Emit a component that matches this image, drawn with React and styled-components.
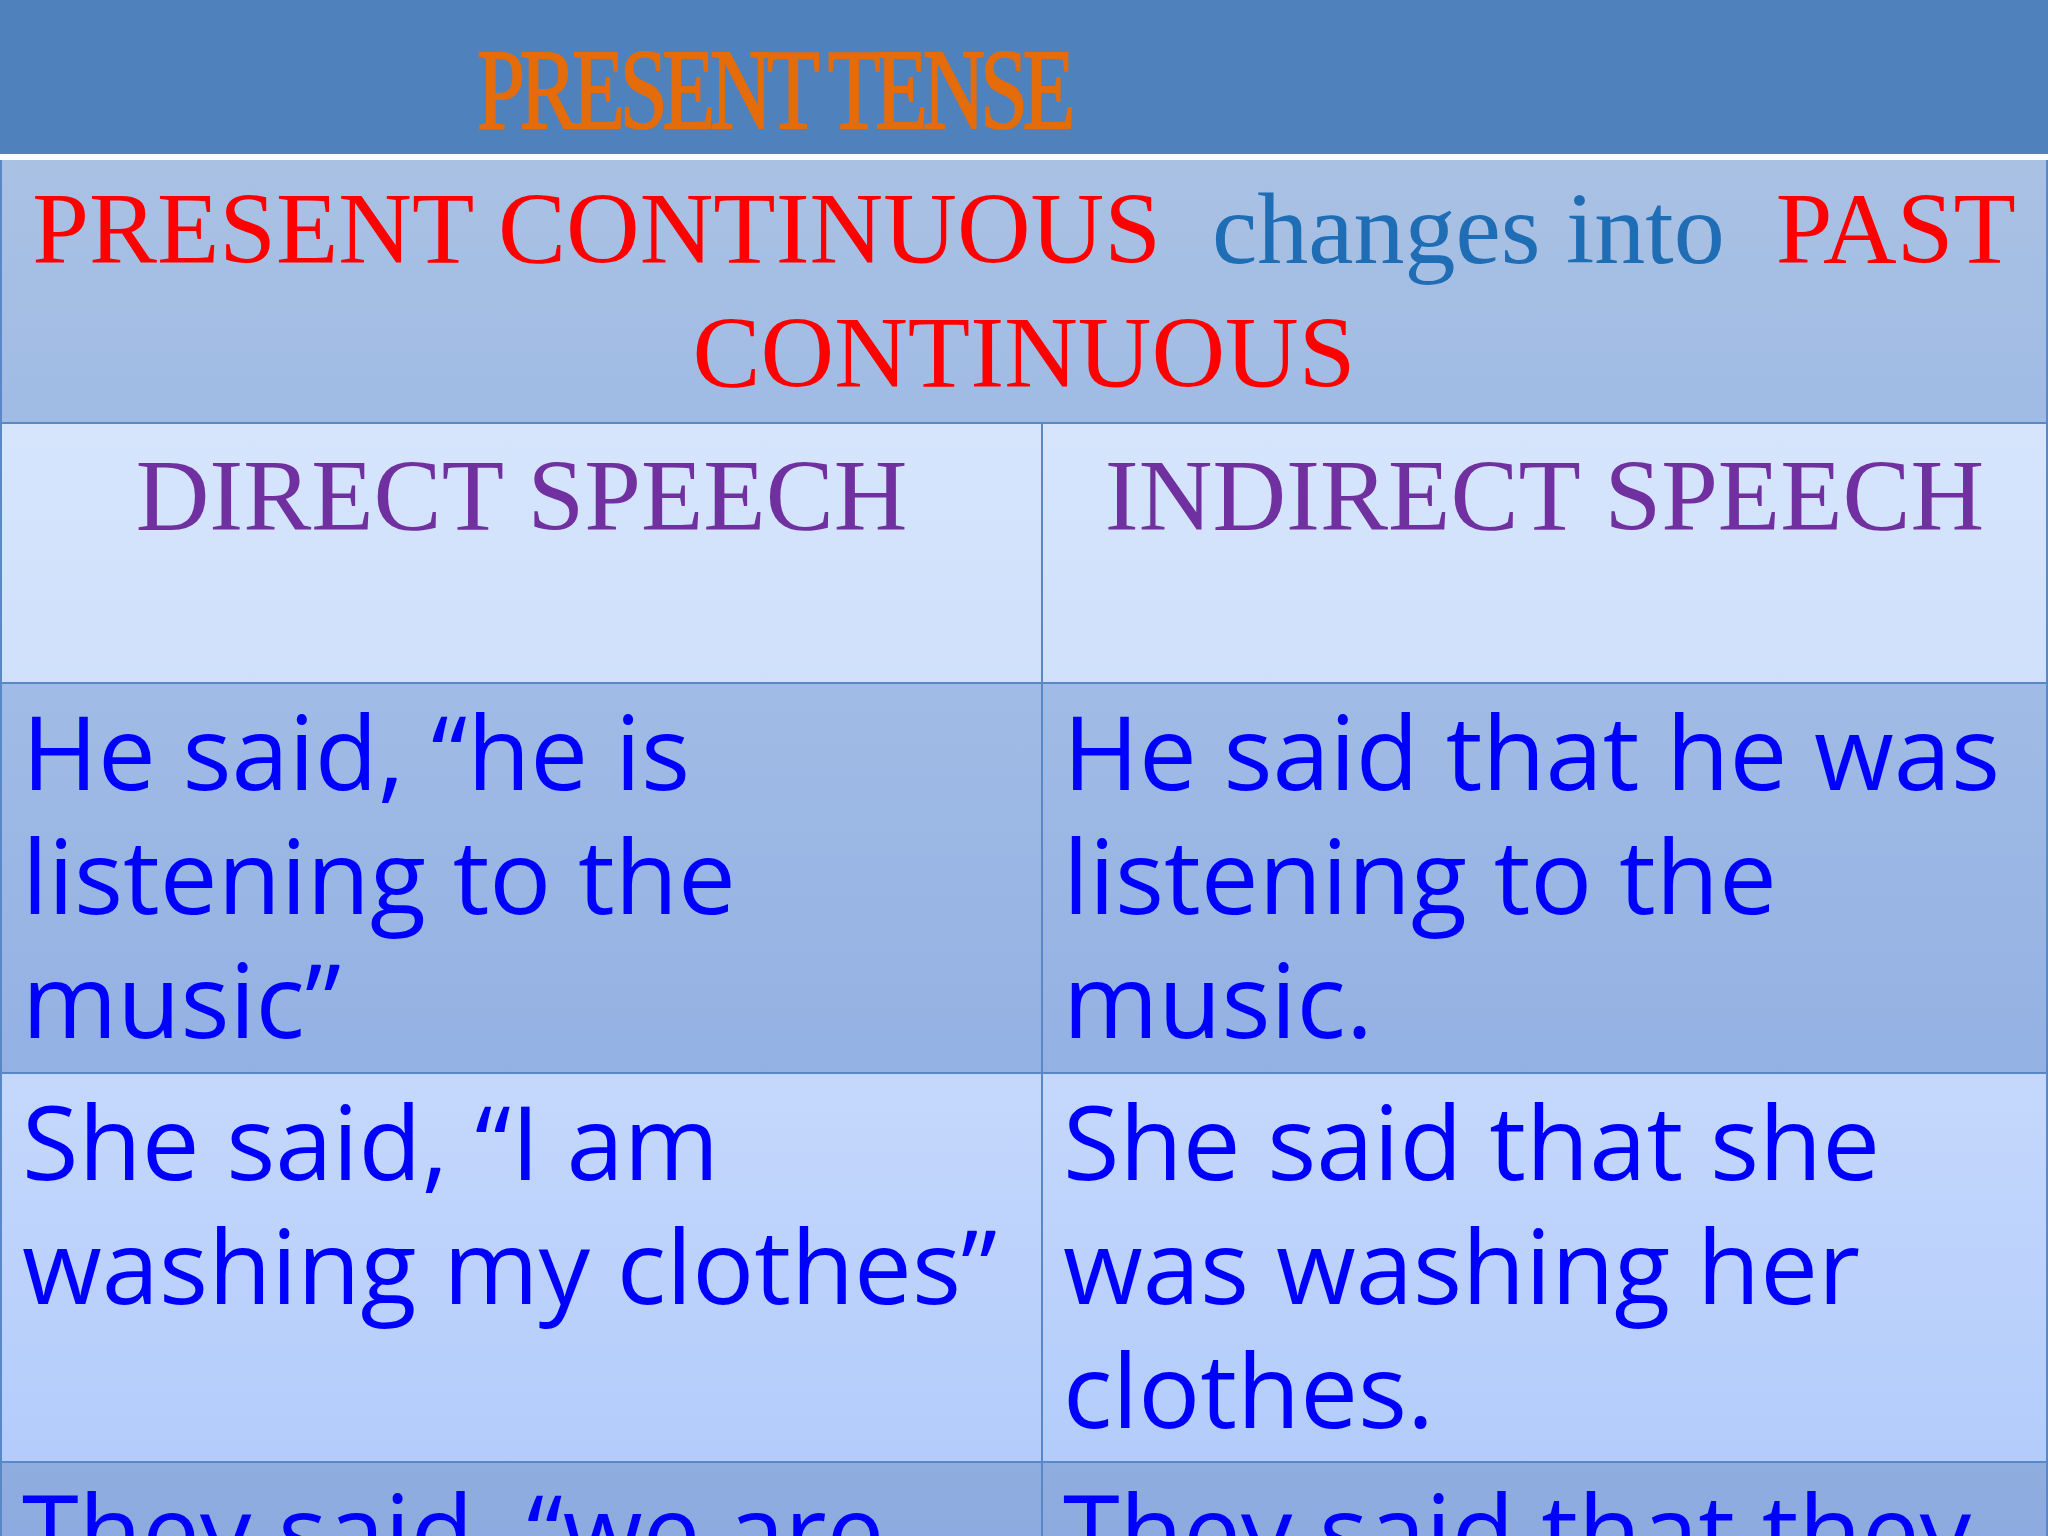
import React from 'react';
import styled, { createGlobalStyle } from 'styled-components';

const GlobalStyle = createGlobalStyle`
  html, body {
    margin: 0;
    padding: 0;
    background: #ffffff;
  }
  * {
    box-sizing: border-box;
  }
`;

const LINE = '#5a87c5';

const Slide = styled.div`
  width: 2048px;
  height: 1536px;
  overflow: hidden;
  display: flex;
  flex-direction: column;
  background: #ffffff;
`;

const Header = styled.header`
  flex: none;
  height: 160px;
  background: #4f81bd;
  border-bottom: 6px solid #ffffff;
  padding-left: 477px;
`;

const Title = styled.h1`
  margin: 32px 0 0;
  font-family: "Liberation Serif", "DejaVu Serif", serif;
  font-weight: 400;
  font-size: 115px;
  line-height: 1;
  letter-spacing: -0.06em;
  color: #e46c0a;
  -webkit-text-stroke: 2px #e46c0a;
  white-space: nowrap;
  transform: scaleX(0.75);
  transform-origin: left top;
`;

const Band = styled.div`
  flex: none;
  height: 262px;
  padding-top: 7px;
  background: linear-gradient(to bottom, #a9c1e3, #a0bbe4);
  border-left: 2px solid ${LINE};
  border-right: 2px solid ${LINE};
  text-align: center;
  font-family: "Liberation Serif", "Times New Roman", serif;
  font-size: 102px;
  line-height: 124px;
`;

const Tense = styled.span`
  color: #ff0000;
`;

const Link = styled.span`
  color: #1f6db5;
`;

const Row = styled.div`
  flex: ${({ $grow }) => ($grow ? '1 1 auto' : 'none')};
  height: ${({ $h }) => ($h ? `${$h}px` : 'auto')};
  display: grid;
  grid-template-columns: 1041px 1fr;
  background: ${({ $bg }) => $bg};
  border-top: 2px solid ${LINE};
  border-left: 2px solid ${LINE};
  border-right: 2px solid ${LINE};
`;

const HeadCell = styled.div`
  padding-top: 10px;
  text-align: center;
  font-family: "Liberation Serif", "Times New Roman", serif;
  font-size: 102px;
  line-height: 124px;
  color: #7030a0;
  white-space: nowrap;
  border-right: ${({ $first }) => ($first ? `2px solid ${LINE}` : 'none')};
`;

const Cell = styled.div`
  padding: 4px 14px 0 20px;
  font-family: "Comic Sans MS", "Open Sans", "DejaVu Sans", sans-serif;
  font-weight: 500;
  font-size: 103px;
  line-height: 124px;
  color: #0000ff;
  white-space: nowrap;
  border-right: ${({ $first }) => ($first ? `2px solid ${LINE}` : 'none')};
`;

const Line = styled.div`
  height: 124px;
`;

const rows = [
  {
    h: 390,
    bg: 'linear-gradient(to bottom, #a0bbe5, #93b1e3)',
    direct: ['He said, \u201che is', 'listening to the', 'music\u201d'],
    indirect: ['He said that he was', 'listening to the', 'music.'],
  },
  {
    h: 389,
    bg: 'linear-gradient(to bottom, #c5d8fc, #b3ccfb)',
    direct: ['She said, \u201cI am', 'washing my clothes\u201d'],
    indirect: ['She said that she', 'was washing her', 'clothes.'],
  },
  {
    grow: true,
    bg: 'linear-gradient(to bottom, #90addf, #8aa9df)',
    direct: ['They said, \u201cwe are'],
    indirect: ['They said that they'],
  },
];

const App = () => (
  <>
    <GlobalStyle />
    <Slide>
      <Header>
        <Title>PRESENT TENSE</Title>
      </Header>

      <Band>
        <Tense>PRESENT CONTINUOUS</Tense>
        {'\u00a0 '}
        <Link>changes into</Link>
        {'\u00a0 '}
        <Tense>PAST</Tense>
        <br />
        <Tense>CONTINUOUS</Tense>
      </Band>

      <Row $h={260} $bg="linear-gradient(to bottom, #d6e5fc, #cfe0fb)">
        <HeadCell $first>DIRECT SPEECH</HeadCell>
        <HeadCell>INDIRECT SPEECH</HeadCell>
      </Row>

      {rows.map((row, i) => (
        <Row key={i} $h={row.h} $grow={row.grow} $bg={row.bg}>
          <Cell $first>
            {row.direct.map((t) => (
              <Line key={t}>{t}</Line>
            ))}
          </Cell>
          <Cell>
            {row.indirect.map((t) => (
              <Line key={t}>{t}</Line>
            ))}
          </Cell>
        </Row>
      ))}
    </Slide>
  </>
);

export default App;
